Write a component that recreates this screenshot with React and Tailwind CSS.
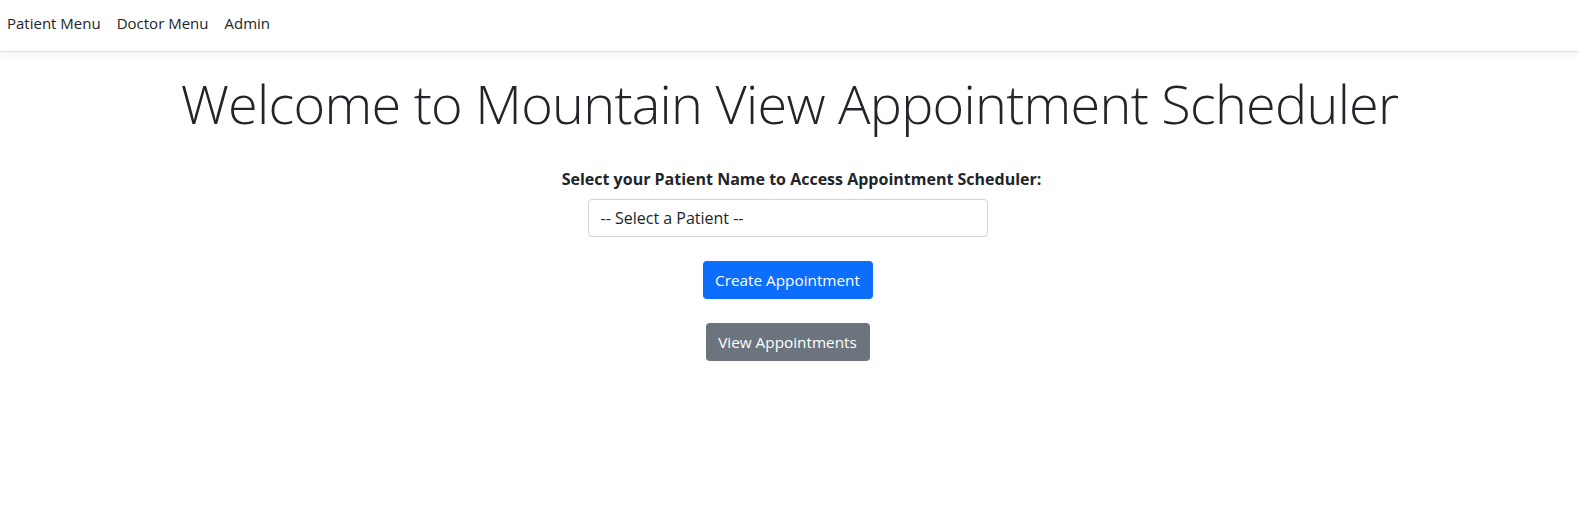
export default function App() {
  const font = { fontFamily: '"Open Sans", "Noto Sans", sans-serif' };
  return (
    <div className="min-h-[523px] bg-white text-[#212529]" style={font}>
      <nav className="relative h-[52px] border-b border-[#dee2e6] shadow-[0_4px_10px_rgba(0,0,0,0.05)] flex items-center pl-[7px] pb-[4px] gap-[16px] text-[15px]">
        <span>Patient Menu</span>
        <span>Doctor Menu</span>
        <span>Admin</span>
      </nav>
      <main className="flex flex-col items-center">
        <h1 className="mt-[18px] text-[54px] font-light leading-[67px] tracking-[-0.72px] whitespace-nowrap">
          Welcome to Mountain View Appointment Scheduler
        </h1>
        <label className="mt-[30px] ml-[24px] text-[16px] font-bold leading-[24px]">
          Select your Patient Name to Access Appointment Scheduler:
        </label>
        <div className="mt-[8px] mr-[4px] w-[400px] h-[38px] border border-[#ced4da] rounded-[4px] flex items-center px-[12px] text-[16px]">
          -- Select a Patient --
        </div>
        <button className="mt-[24px] mr-[4px] w-[170px] h-[38px] rounded-[4px] bg-[#0d6efd] text-white text-[15.3px]">
          Create Appointment
        </button>
        <button className="mt-[24px] mr-[4px] w-[164px] h-[38px] rounded-[4px] bg-[#6c757d] text-white text-[15.3px]">
          View Appointments
        </button>
      </main>
    </div>
  );
}
